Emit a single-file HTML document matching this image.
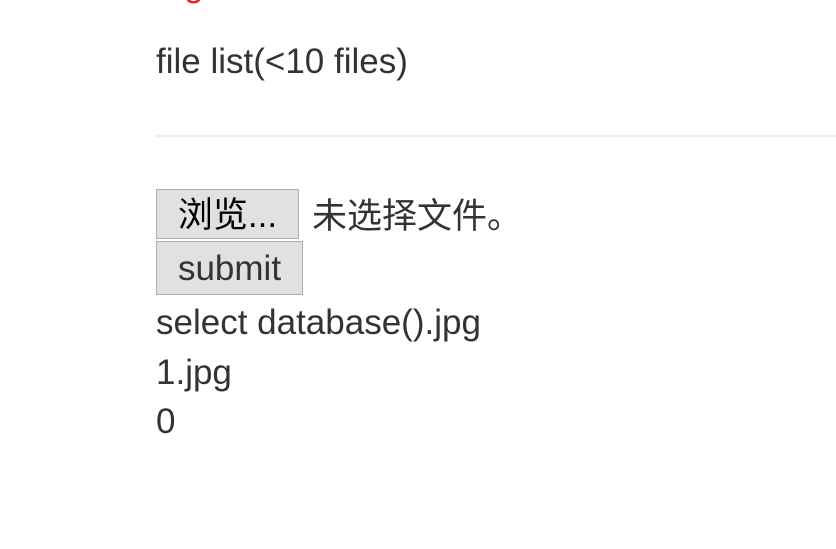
<!DOCTYPE html>
<html><head><meta charset="utf-8"><style>
body{margin:0;width:836px;height:549px;background:#fff;overflow:hidden;font-family:"Liberation Sans","Noto Sans CJK SC",sans-serif;color:#333;font-size:35px;position:relative}
.t{position:absolute;left:156px;height:50px;line-height:50px;white-space:nowrap}
.b{position:absolute;left:156px;background:#e1e1e1;border:1px solid #adadad;box-sizing:border-box;color:#000;font-size:35px;text-align:center;line-height:52px;white-space:nowrap}
</style></head><body>
<div class="t" style="top:-40px;left:184px;color:#e8212e">g</div>
<div class="t" style="top:37px">file list(&lt;10 files)</div>
<div style="position:absolute;left:155px;top:135px;width:681px;height:2px;background:#eee"></div>
<div class="b" style="top:189px;width:143px;height:50px">浏览...</div>
<div class="t" style="top:192px;left:312px">未选择文件。</div>
<div class="b" style="top:241px;width:147px;height:54px;line-height:54px;color:#333">submit</div>
<div class="t" style="top:298px">select database().jpg</div>
<div class="t" style="top:348px">1.jpg</div>
<div class="t" style="top:397px">0</div>
</body></html>
